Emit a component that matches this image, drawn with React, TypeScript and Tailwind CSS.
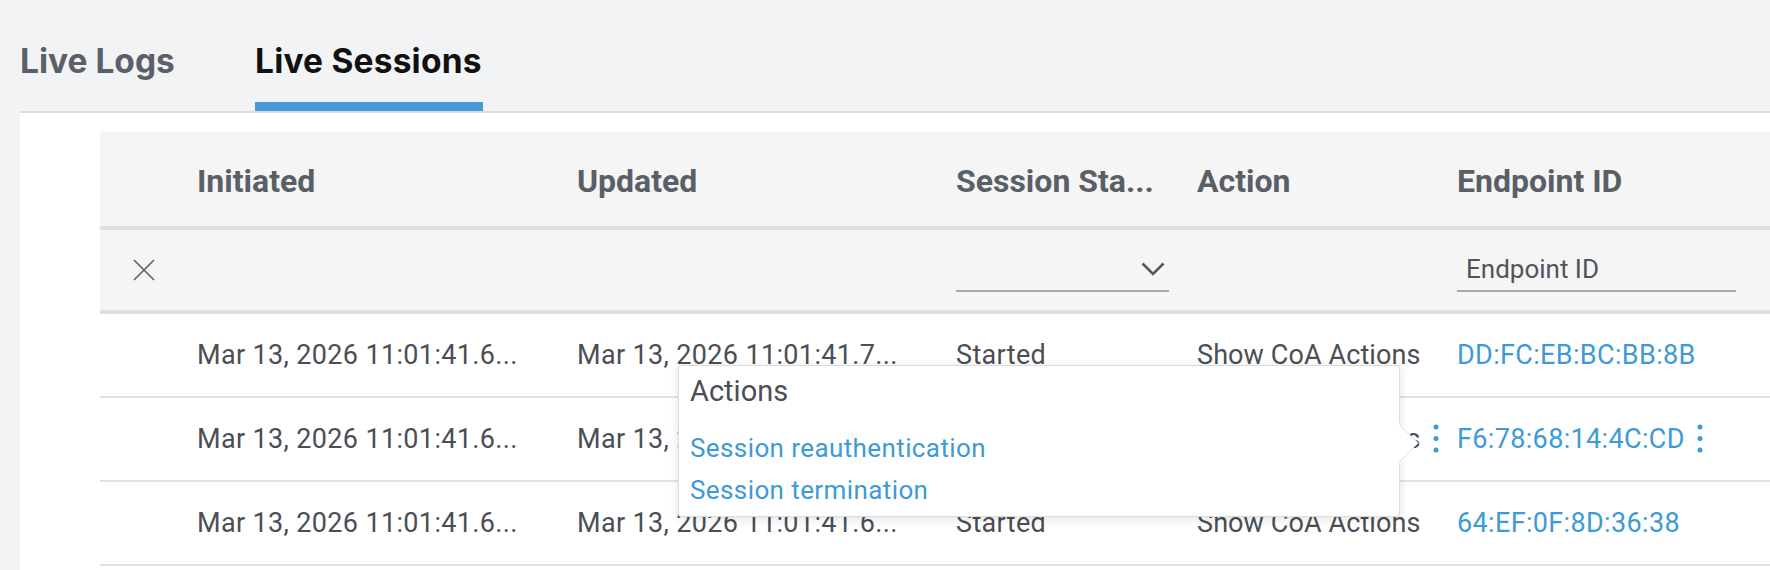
import React from 'react';

type Row = {
  initiated: string;
  updated: string;
  status: string;
  action: string;
  endpoint: string;
  menu?: boolean;
};

const rows: Row[] = [
  {
    initiated: 'Mar 13, 2026 11:01:41.6...',
    updated: 'Mar 13, 2026 11:01:41.7...',
    status: 'Started',
    action: 'Show CoA Actions',
    endpoint: 'DD:FC:EB:BC:BB:8B',
  },
  {
    initiated: 'Mar 13, 2026 11:01:41.6...',
    updated: 'Mar 13, 2026 11:01:41.6...',
    status: 'Started',
    action: 'Show CoA Actions',
    endpoint: 'F6:78:68:14:4C:CD',
    menu: true,
  },
  {
    initiated: 'Mar 13, 2026 11:01:41.6...',
    updated: 'Mar 13, 2026 11:01:41.6...',
    status: 'Started',
    action: 'Show CoA Actions',
    endpoint: '64:EF:0F:8D:36:38',
  },
];

const cols = 'grid grid-cols-[97px_380px_379px_241px_260px_1fr]';

function Kebab() {
  return (
    <svg width="6" height="30" viewBox="0 0 6 30" className="ml-[12px] shrink-0">
      <circle cx="3" cy="3" r="2.5" fill="#3d9ad6" />
      <circle cx="3" cy="14.5" r="2.5" fill="#3d9ad6" />
      <circle cx="3" cy="26" r="2.5" fill="#3d9ad6" />
    </svg>
  );
}

function ActionsPopover() {
  return (
    <div className="absolute left-[578px] top-[233px] z-10 w-[722px] h-[152px] bg-white border border-[#dcdcdc] rounded-[3px] shadow-[0_2px_10px_rgba(0,0,0,0.12)] pt-[11px] pl-[11px]">
      <div className="text-[29px] leading-none text-[#4a4f55]">Actions</div>
      <div className="mt-[21px] text-[26px] leading-[42px] tracking-[0.4px] text-[#3d9ad6]">
        <div>Session reauthentication</div>
        <div>Session termination</div>
      </div>
      {/* caret */}
      <svg
        width="22"
        height="42"
        viewBox="0 0 22 42"
        className="absolute right-[-21px] top-[56px]"
      >
        <path d="M0 1 L20 21 L0 41 Z" fill="#ffffff" stroke="#dcdcdc" strokeWidth="1" />
        <rect x="0" y="0" width="1.5" height="42" fill="#ffffff" />
      </svg>
    </div>
  );
}

export default function App() {
  return (
    <div className="w-[1770px] h-[570px] bg-[#f2f3f5] overflow-hidden font-[Roboto,sans-serif]">
      {/* Tabs */}
      <div className="flex h-[111px] pl-[20px] font-[Inter,sans-serif] font-bold text-[33.5px] leading-none">
        <div className="w-[235px] pt-[45px] text-[#5b6068]">Live Logs</div>
        <div className="flex flex-col pt-[45px] text-[#111111]">
          <span className="pr-[1px] tracking-[0.2px]">Live Sessions</span>
          <div className="mt-auto h-[9px] bg-[#469ad5]" />
        </div>
      </div>

      {/* Panel */}
      <div className="ml-[20px] h-full bg-white border-t-2 border-[#dcdcdc] pt-[19px] pl-[80px]">
        <div className="relative">
          {/* Header */}
          <div className={`${cols} h-[98px] items-center pt-[4px] bg-[#f5f5f5] border-b-4 border-[#dfdfdf] text-[32px] font-bold leading-none text-[#5a5f67]`}>
            <div />
            <div>Initiated</div>
            <div>Updated</div>
            <div>Session Sta...</div>
            <div>Action</div>
            <div>Endpoint ID</div>
          </div>

          {/* Filters */}
          <div className={`${cols} h-[84px] items-center bg-[#f5f5f5] border-b-4 border-[#dfdfdf]`}>
            <div className="pl-[33px]">
              <svg width="22" height="22" viewBox="0 0 22 22">
                <path d="M1 1 L21 21 M21 1 L1 21" stroke="#5a5f67" strokeWidth="1.6" />
              </svg>
            </div>
            <div />
            <div />
            <div className="flex items-center justify-end w-[213px] h-[44px] border-b-2 border-[#a8a8a8] pr-[4px]">
              <svg width="24" height="14" viewBox="0 0 24 14">
                <path d="M1.5 1.5 L12 12 L22.5 1.5" fill="none" stroke="#555a60" strokeWidth="2.6" />
              </svg>
            </div>
            <div />
            <div className="flex items-center w-[279px] h-[44px] border-b-2 border-[#a8a8a8] pl-[9px] text-[26px] text-[#50555b]">
              Endpoint ID
            </div>
          </div>

          {/* Rows */}
          {rows.map((r, i) => (
            <div
              key={i}
              className={`${cols} h-[84px] items-center border-b-2 border-[#e2e2e2] text-[27px] leading-none tracking-[0.35px] text-[#4b4f55] whitespace-nowrap`}
            >
              <div />
              <div>{r.initiated}</div>
              <div>{r.updated}</div>
              <div>{r.status}</div>
              <div className="flex items-center tracking-[0.1px]">
                <span>{r.action}</span>
                {r.menu && <Kebab />}
              </div>
              <div className="flex items-center text-[#3d9ad6]">
                <span>{r.endpoint}</span>
                {r.menu && <Kebab />}
              </div>
            </div>
          ))}

          <ActionsPopover />
        </div>
      </div>
    </div>
  );
}
